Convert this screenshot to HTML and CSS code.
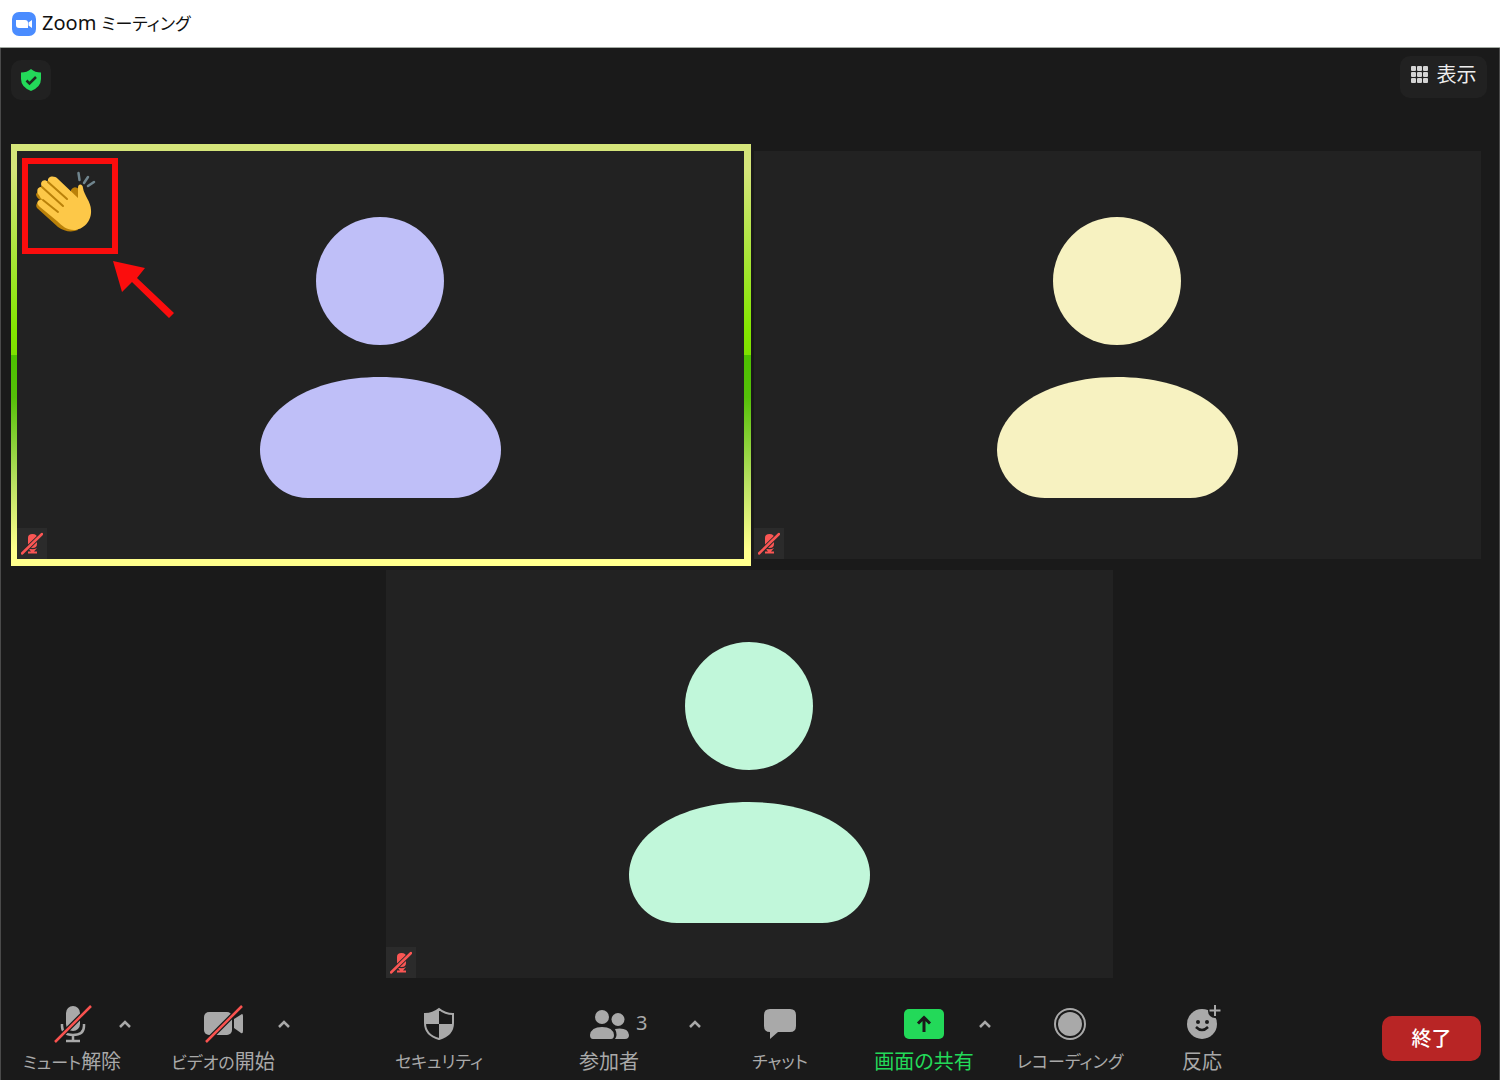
FILE: index.html
```html
<!DOCTYPE html>
<html lang="ja">
<head>
<meta charset="utf-8">
<meta name="viewport" content="width=device-width, initial-scale=1">
<title>Zoom ミーティング</title>
<link rel="stylesheet" href="styles.css">
</head>
<body>
<svg class="symbols" aria-hidden="true">
  <symbol id="avatar" viewBox="0 0 241 281">
    <circle cx="120" cy="64" r="64"/>
    <path d="M48 281C17 281 0 255 0 233C0 193 50 160 120 160C191 160 241 193 241 233C241 255 224 281 193 281Z"/>
  </symbol>
  <symbol id="muted" viewBox="0 0 22 24">
    <path d="M7 5.500Q7 2 11.500 2Q16 2 16 5.500V12Q16 16 11.500 16Q7 16 7 12Z"/>
    <path d="M7 16Q11.500 18.500 16 16L13 19.500H16V21.500H7V19.500H10Z"/>
    <path d="M1 21.500L21 2" stroke="#2b2b2b" stroke-width="4.500"/>
    <path d="M1 21.500L21 2" stroke="currentColor" stroke-width="2.500" stroke-linecap="round"/>
  </symbol>
  <symbol id="caret" viewBox="0 0 14 10">
    <path d="M2 8L7 3L12 8" fill="none" stroke="currentColor" stroke-width="2.500"/>
  </symbol>
</svg>

<header class="titlebar">
  <svg class="app-icon" viewBox="0 0 24 24" aria-hidden="true">
    <rect width="24" height="24" rx="7" fill="#4a8cff"/>
    <path d="M4 8H13Q16 8 16 11V16H7Q4 16 4 13Z" fill="#fff"/>
    <path d="M16.500 10.500L20 8V16L16.500 13.500Z" fill="#fff"/>
  </svg>
  <h1 class="title">Zoom <span class="kana">ミーティング</span></h1>
</header>

<main class="meeting">
  <div class="topbar">
    <button class="chip chip-shield" type="button" aria-label="暗号化">
      <svg viewBox="0 0 22 24" width="22" height="24" aria-hidden="true">
        <path d="M11 1Q15 4.500 21 4.500V11Q21 19 11 23Q1 19 1 11V4.500Q7 4.500 11 1Z" fill="#23d959"/>
        <path d="M6.500 12.500L9.500 15.500L16 9" fill="none" stroke="#1f2a20" stroke-width="2.500"/>
      </svg>
    </button>
    <button class="chip chip-view" type="button">
      <svg class="grid-icon" viewBox="0 0 18 18" width="18" height="18" aria-hidden="true">
        <rect width="5" height="5" rx="1"/><rect x="6" width="5" height="5" rx="1"/><rect x="12" width="5" height="5" rx="1"/>
        <rect y="6" width="5" height="5" rx="1"/><rect x="6" y="6" width="5" height="5" rx="1"/><rect x="12" y="6" width="5" height="5" rx="1"/>
        <rect y="12" width="5" height="5" rx="1"/><rect x="6" y="12" width="5" height="5" rx="1"/><rect x="12" y="12" width="5" height="5" rx="1"/>
      </svg>
      <span>表示</span>
    </button>
  </div>

  <div class="gallery">
    <section class="tile tile-speaking">
      <svg class="avatar lavender"><use href="#avatar"/></svg>
      <span class="mic"><svg><use href="#muted"/></svg></span>
      <div class="reaction">
        <svg viewBox="0 0 84 84" aria-label="拍手">
          <path d="M8 30L15 22L24 22L50 66Q40 70 30 63L9 44Q7 41 10 38L14 37Q8 34 8 30Z" fill="#ba8109"/>
          <path d="M43 26Q46 21 51 25V36L43 31Z" fill="#ba8109"/>
          <path d="M11 31C8 28 9 22 14 23C11 18 16 14 20 18C19 12 26 11 30 15L50 34L50 24C50 19 55 20 55 24C56 31 63 38 63 46C64 57 55 66 46 66C39 66 34 62 29 57L12 43C7 39 10 35 15 36Q12 34 11 31Z" fill="#fdc848"/>
          <path d="M20 18L39 35M14 23L35 42M15 36L30 48" fill="none" stroke="#ba8109" stroke-width="2" stroke-linecap="round"/>
          <path d="M50.500 9L51.500 16M60 13L56 19M66 18L60 22" fill="none" stroke="#70858e" stroke-width="2.500" stroke-linecap="round"/>
        </svg>
      </div>
      <svg class="arrow" viewBox="0 0 64 60" aria-hidden="true">
        <path d="M1 1L33 8L25 18L62 53L57 58L20 22L10 32Z" fill="#fb0d0d"/>
      </svg>
    </section>
    <section class="tile">
      <svg class="avatar cream"><use href="#avatar"/></svg>
      <span class="mic"><svg><use href="#muted"/></svg></span>
    </section>
    <section class="tile tile-last">
      <svg class="avatar mint"><use href="#avatar"/></svg>
      <span class="mic"><svg><use href="#muted"/></svg></span>
    </section>
  </div>

  <nav class="toolbar" aria-label="ミーティング操作">
    <button class="tool col-mute" type="button">
      <svg width="40" height="40" viewBox="0 0 40 40" aria-hidden="true">
        <rect x="14" y="2" width="14" height="25" rx="7"/>
        <path d="M10 20V22Q10 31 21 31Q32 31 32 22V20M21 31V37M14 37H28" fill="none" stroke="currentColor" stroke-width="2.500"/>
        <path d="M3 38L39 2" stroke="#1a1a1a" stroke-width="5"/>
        <path d="M3 38L39 2" stroke="#f9524f" stroke-width="2.500"/>
      </svg>
      <span class="label"><span class="kana">ミュート</span>解除</span>
    </button>
    <button class="caret col-mute-more" type="button" aria-label="オーディオ設定"><svg><use href="#caret"/></svg></button>
    <button class="tool col-video" type="button">
      <svg width="40" height="40" viewBox="0 0 40 40" aria-hidden="true">
        <rect x="1" y="8" width="28" height="23" rx="5"/>
        <path d="M31 15L39 10Q40 10 40 12V27Q40 30 38 29L31 24Z"/>
        <path d="M3 38L39 2" stroke="#1a1a1a" stroke-width="5"/>
        <path d="M3 38L39 2" stroke="#f9524f" stroke-width="2.500"/>
      </svg>
      <span class="label"><span class="kana">ビデオの</span>開始</span>
    </button>
    <button class="caret col-video-more" type="button" aria-label="ビデオ設定"><svg><use href="#caret"/></svg></button>
    <button class="tool col-security" type="button">
      <svg width="40" height="40" viewBox="0 0 40 40" aria-hidden="true">
        <path d="M20 5Q26 10 34 10V19Q34 31 20 35Q6 31 6 19V10Q14 10 20 5Z" fill="none" stroke="currentColor" stroke-width="2"/>
        <path d="M20 5V20H6V10Q14 10 20 5ZM20 20H34Q34 31 20 35Z"/>
      </svg>
      <span class="label kana">セキュリティ</span>
    </button>
    <button class="tool col-people" type="button">
      <svg width="40" height="40" viewBox="0 0 40 40" aria-hidden="true">
        <circle cx="13" cy="13" r="7"/><circle cx="29" cy="15.500" r="6.500"/>
        <path d="M4 35Q1 35 1 31Q2 23 13 23Q24 23 25 31Q25 35 22 35ZM26 25Q39 23 40 31Q40 35 36 35H26Q29 31 26 25Z"/>
      </svg>
      <span class="label">参加者</span>
      <span class="count">3</span>
    </button>
    <button class="caret col-people-more" type="button" aria-label="参加者メニュー"><svg><use href="#caret"/></svg></button>
    <button class="tool col-chat" type="button">
      <svg width="40" height="40" viewBox="0 0 40 40" aria-hidden="true">
        <path d="M10 5H30Q36 5 36 11V22Q36 28 30 28H18L10 35V28Q4 28 4 22V11Q4 5 10 5Z"/>
      </svg>
      <span class="label kana">チャット</span>
    </button>
    <button class="tool tool-share col-share" type="button">
      <svg width="40" height="40" viewBox="0 0 40 40" aria-hidden="true">
        <rect y="5" width="40" height="30" rx="5"/>
        <path d="M20 28V14M14 19.500L20 13.500L26 19.500" fill="none" stroke="#1a1a1a" stroke-width="3"/>
      </svg>
      <span class="label">画面の共有</span>
    </button>
    <button class="caret col-share-more" type="button" aria-label="共有設定"><svg><use href="#caret"/></svg></button>
    <button class="tool col-record" type="button">
      <svg width="40" height="40" viewBox="0 0 40 40" aria-hidden="true">
        <circle cx="20" cy="20" r="15" fill="none" stroke="currentColor" stroke-width="2"/><circle cx="20" cy="20" r="12"/>
      </svg>
      <span class="label kana">レコーディング</span>
    </button>
    <button class="tool col-react" type="button">
      <svg width="40" height="40" viewBox="0 0 40 40" aria-hidden="true">
        <circle cx="20" cy="20" r="15"/>
        <circle cx="33" cy="7" r="7" fill="#1a1a1a"/>
        <path d="M33 1V12M27.500 6.500H38.500" stroke="currentColor" stroke-width="2"/>
        <circle cx="16" cy="18" r="2" fill="#1a1a1a"/><circle cx="25" cy="18" r="2" fill="#1a1a1a"/>
        <path d="M14 23Q20 29 26 23" fill="none" stroke="#1a1a1a" stroke-width="2.500"/>
      </svg>
      <span class="label">反応</span>
    </button>
    <button class="end col-end" type="button">終了</button>
  </nav>
</main>
</body>
</html>
```

FILE: styles.css
```css
* { box-sizing: border-box; }

body {
  margin: 0;
  min-height: 100vh;
  display: flex;
  flex-direction: column;
  background: #1a1a1a;
  font-family: "Noto Sans", "Noto Sans CJK JP", sans-serif;
  font-feature-settings: "palt";
  font-size: 20px;
  line-height: 24px;
}

button {
  margin: 0;
  padding: 0;
  border: 0;
  background: none;
  color: inherit;
  font: inherit;
  font-feature-settings: inherit;
  cursor: pointer;
}

svg { display: block; fill: currentColor; }
.symbols { position: absolute; width: 0; height: 0; }

.titlebar {
  display: flex;
  align-items: center;
  gap: 6px;
  height: 48px;
  padding: 0 12px;
  background: #fff;
  border-bottom: 1px solid #a3aaa3;
}
.app-icon { width: 24px; height: 24px; }
.title { margin: 0; font-size: 20px; font-weight: 400; color: #111; }
.kana { font-size: 17px; }

.meeting {
  flex: 1;
  display: flex;
  flex-direction: column;
  border: solid #4a4a4a;
  border-width: 0 1px;
}

.topbar {
  display: flex;
  justify-content: space-between;
  align-items: flex-start;
  height: 103px;
  padding: 8px 12px 0 10px;
}
.chip {
  display: flex;
  align-items: center;
  justify-content: center;
  gap: 8px;
  border-radius: 10px;
  background: #212121;
  color: #eee;
}
.chip-shield { width: 40px; height: 40px; margin-top: 4px; }
.chip-view { width: 87px; height: 42px; padding-bottom: 4px; }
.grid-icon { color: #d4d4d4; }

.gallery {
  flex: 1;
  display: grid;
  grid-template-columns: 1fr 1fr;
  grid-template-rows: 1fr 1fr;
  gap: 11px 10px;
  padding: 0 18px 0 16px;
}
.tile {
  position: relative;
  display: flex;
  align-items: center;
  justify-content: center;
  min-height: 360px;
  padding-top: 5px;
  background: #222;
}
.tile-last {
  grid-column: 1 / -1;
  justify-self: center;
  width: calc(50% - 5px);
  padding-top: 17px;
}
.tile-speaking::before {
  content: "";
  position: absolute;
  inset: -7px -7px -7px -6px;
  z-index: -1;
  background: linear-gradient(#d5e57a 0 6%, #84e600 44%, #7ee000 50%, #4dc000 50%, #55c008 60%, #b8e060 80%, #ffff8c 96%);
}
.avatar { width: 241px; height: 281px; }
.lavender { color: #bfbff8; }
.cream { color: #f7f2c1; }
.mint { color: #c1f7da; }

.mic {
  position: absolute;
  left: 0;
  bottom: 0;
  display: grid;
  place-items: center;
  width: 30px;
  height: 31px;
  background: #2b2b2b;
  color: #fb5654;
}
.mic svg { width: 22px; height: 24px; }

.reaction {
  position: absolute;
  left: 5px;
  top: 7px;
  width: 96px;
  height: 96px;
  border: 6px solid #fb0d0d;
}
.arrow { position: absolute; left: 95px; top: 109px; width: 64px; height: 60px; }

.toolbar {
  display: grid;
  grid-template-columns:
    92px 14px 37fr 108px 14px 102fr 92px 78fr 92px 33fr 14px 32fr
    92px 44fr 108px 14px 24fr 108px 32fr 92px 134fr 99px;
  grid-template-rows: 76px;
  height: 102px;
  padding: 26px 18px 0 25px;
  color: #a9a9a9;
}
.tool {
  position: relative;
  display: flex;
  flex-direction: column;
  align-items: center;
  gap: 6px;
}
.tool-share { color: #23d959; }
.label { white-space: nowrap; }
.count {
  position: absolute;
  left: 73px;
  top: 7px;
}
.caret { align-self: start; height: 40px; }
.caret svg { width: 14px; height: 10px; }
.end {
  align-self: start;
  height: 45px;
  margin-top: 12px;
  border-radius: 10px;
  background: #b82525;
  color: #fff;
  font-weight: 500;
}

.col-mute { grid-column: 1; }
.col-mute-more { grid-column: 2; }
.col-video { grid-column: 4; }
.col-video-more { grid-column: 5; }
.col-security { grid-column: 7; }
.col-people { grid-column: 9; }
.col-people-more { grid-column: 11; }
.col-chat { grid-column: 13; }
.col-share { grid-column: 15; }
.col-share-more { grid-column: 16; }
.col-record { grid-column: 18; }
.col-react { grid-column: 20; }
.col-end { grid-column: 22; }
```
